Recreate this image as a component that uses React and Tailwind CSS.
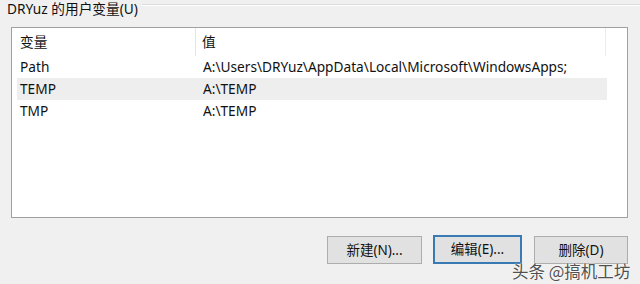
export default function App() {
  const font = { fontFamily: '"Noto Sans", "Noto Sans CJK SC", sans-serif' };
  return (
    <div className="w-[640px] h-[284px] bg-[#f0f0f0] overflow-hidden relative text-[13.7px] text-[#111111]" style={font}>
      <div className="flex items-start h-[27px]">
        <span className="pl-[7px] leading-[15px] mt-[1px] whitespace-nowrap">DRYuz 的用户变量(U)</span>
        <div className="flex-1 ml-[4px] mt-[4px] border-t border-[#dcdcdc] border-b border-b-white h-[2px]" />
      </div>
      <div className="ml-[11px] w-[617px] h-[191px] bg-white border border-[#a0a0a0] flex flex-col">
        <div className="flex h-[28px] items-center">
          <div className="w-[184px] h-full flex items-center pl-[8px] border-r border-[#e5e5e5]">变量</div>
          <div className="w-[410px] h-full flex items-center pl-[6px] border-r border-[#ececec]">值</div>
        </div>
        {[
          ["Path", "A:\\Users\\DRYuz\\AppData\\Local\\Microsoft\\WindowsApps;", false],
          ["TEMP", "A:\\TEMP", true],
          ["TMP", "A:\\TEMP", false],
        ].map(([k, v, hl]) => (
          <div key={k} className={`ml-[5px] w-[590px] h-[22px] flex items-center ${hl ? "bg-[#eeeeee]" : ""}`}>
            <div className="w-[180px] pl-[3px]">{k}</div>
            <div className="pl-[6px] whitespace-nowrap">{v}</div>
          </div>
        ))}
      </div>
      <div className="flex mt-[18px] pl-[327px] gap-[11px]">
        <button className="w-[95px] h-[28px] bg-[#e1e1e1] border border-[#adadad] text-[13.5px]">新建(N)...</button>
        <button className="w-[89px] h-[29px] -mt-[1px] bg-[#e1e1e1] border-2 border-[#3a7ab3] text-[13.5px]">编辑(E)...</button>
        <button className="ml-[1px] w-[94px] h-[28px] bg-[#e1e1e1] border border-[#adadad] text-[13.5px]">删除(D)</button>
      </div>
      <div
        className="absolute left-[512px] top-[261px] text-[16.5px] leading-[21px] text-[#505050] whitespace-nowrap"
        style={{ fontFamily: '"Noto Sans CJK SC", sans-serif', textShadow: "0 0 2px #fff, 0 0 1px #fff" }}
      >
        头条 @搞机工坊
      </div>
    </div>
  );
}
